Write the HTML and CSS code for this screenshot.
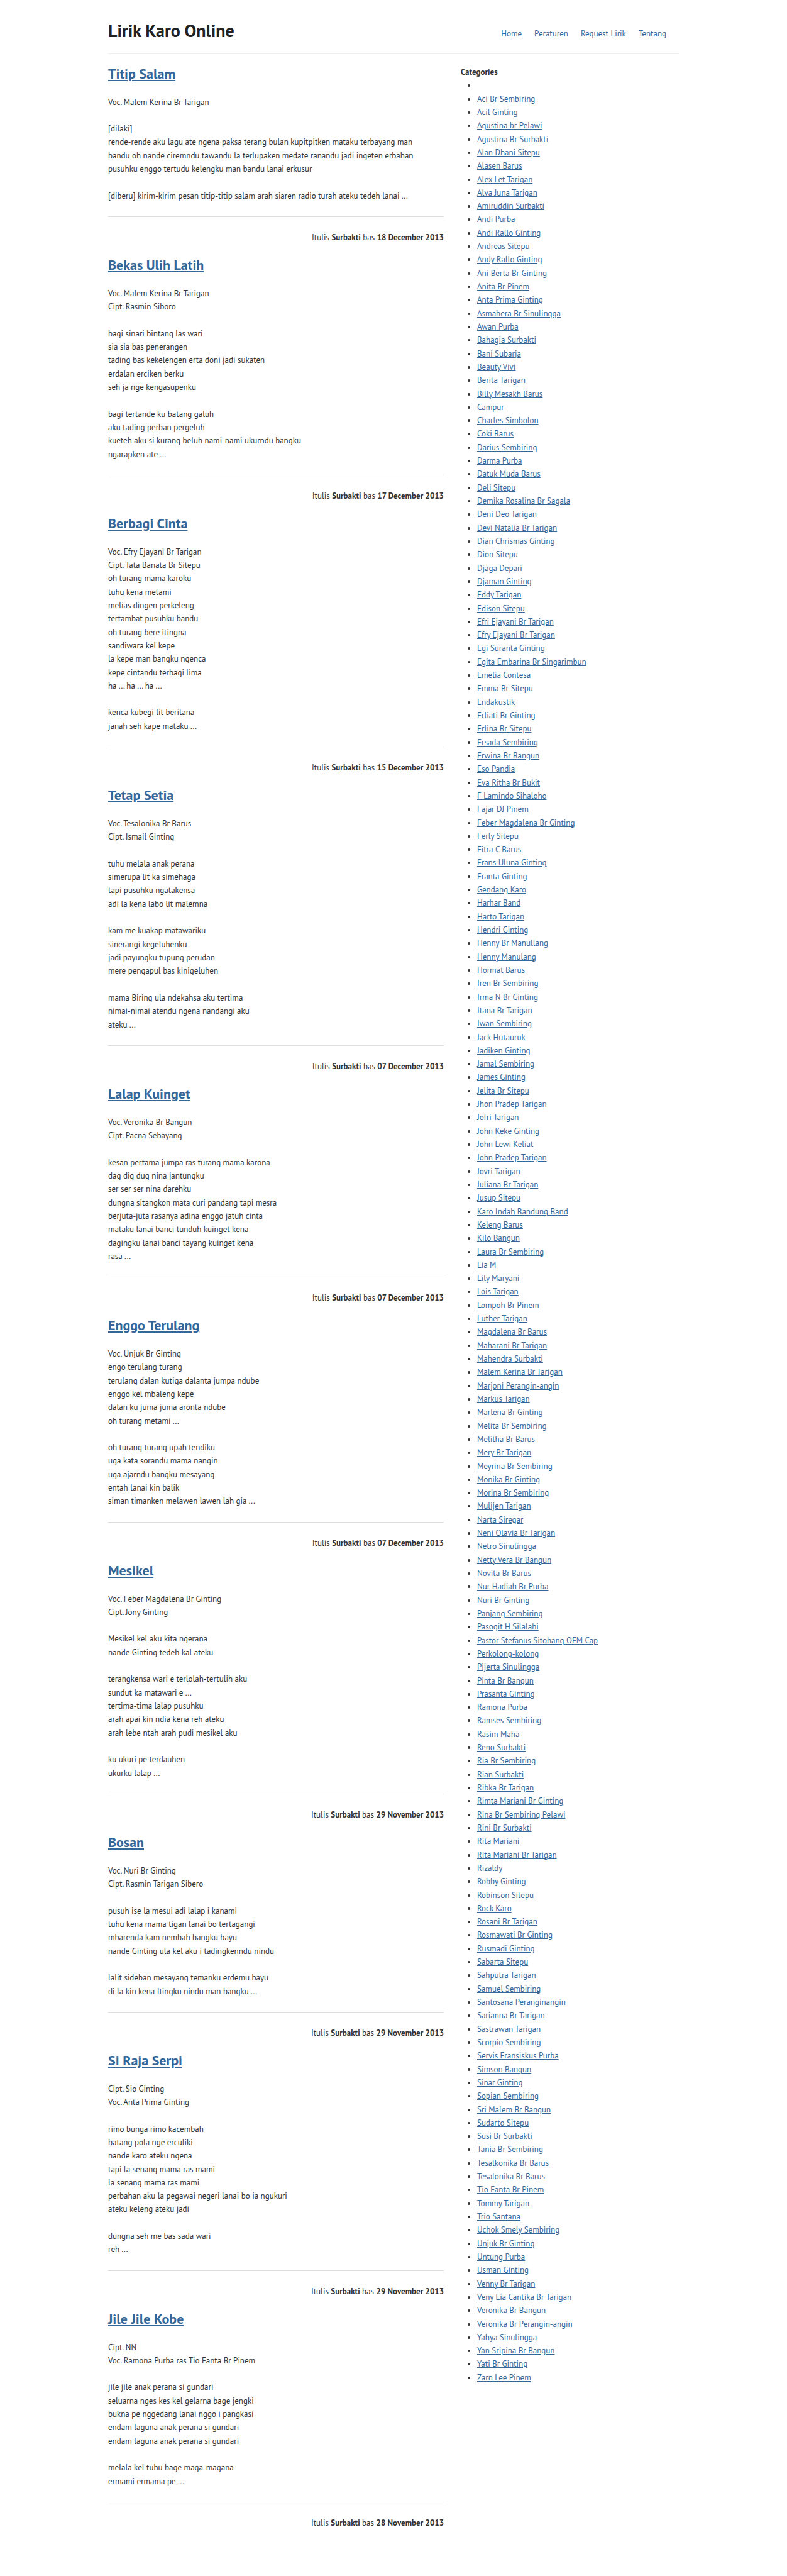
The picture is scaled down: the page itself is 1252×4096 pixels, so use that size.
FILE: index.html
```html
<!DOCTYPE html>
<html lang="id">
<head>
<meta charset="utf-8">
<meta name="viewport" content="width=device-width, initial-scale=1">
<title>Lirik Karo Online</title>
<link rel="stylesheet" href="styles.css">
</head>
<body>
<div class="page">
<header class="site-header">
<h1 class="site-title">Lirik Karo Online</h1>
<nav class="site-nav">
<a href="#">Home</a>
<a href="#">Peraturen</a>
<a href="#">Request Lirik</a>
<a href="#">Tentang</a>
</nav>
</header>
<div class="columns">
<main class="posts">
<article class="post">
<h2 class="post-title"><a href="#">Titip Salam</a></h2>
<p class="lyrics">Voc. Malem Kerina Br Tarigan

[dilaki]
rende-rende aku lagu ate ngena paksa terang bulan kupitpitken mataku terbayang man
bandu oh nande ciremndu tawandu la terlupaken medate ranandu jadi ingeten erbahan
pusuhku enggo tertudu kelengku man bandu lanai erkusur

[diberu] kirim-kirim pesan titip-titip salam arah siaren radio turah ateku tedeh lanai ...</p>
<p class="byline">Itulis <strong>Surbakti</strong> bas <strong>18 December 2013</strong></p>
</article>
<article class="post">
<h2 class="post-title"><a href="#">Bekas Ulih Latih</a></h2>
<p class="lyrics">Voc. Malem Kerina Br Tarigan
Cipt. Rasmin Siboro

bagi sinari bintang las wari
sia sia bas penerangen
tading bas kekelengen erta doni jadi sukaten
erdalan erciken berku
seh ja nge kengasupenku

bagi tertande ku batang galuh
aku tading perban pergeluh
kueteh aku si kurang beluh nami-nami ukurndu bangku
ngarapken ate ...</p>
<p class="byline">Itulis <strong>Surbakti</strong> bas <strong>17 December 2013</strong></p>
</article>
<article class="post">
<h2 class="post-title"><a href="#">Berbagi Cinta</a></h2>
<p class="lyrics">Voc. Efry Ejayani Br Tarigan
Cipt. Tata Banata Br Sitepu
oh turang mama karoku
tuhu kena metami
melias dingen perkeleng
tertambat pusuhku bandu
oh turang bere itingna
sandiwara kel kepe
la kepe man bangku ngenca
kepe cintandu terbagi lima
ha ... ha ... ha ...

kenca kubegi lit beritana
janah seh kape mataku ...</p>
<p class="byline">Itulis <strong>Surbakti</strong> bas <strong>15 December 2013</strong></p>
</article>
<article class="post">
<h2 class="post-title"><a href="#">Tetap Setia</a></h2>
<p class="lyrics">Voc. Tesalonika Br Barus
Cipt. Ismail Ginting

tuhu melala anak perana
simerupa lit ka simehaga
tapi pusuhku ngatakensa
adi la kena labo lit malemna

kam me kuakap matawariku
sinerangi kegeluhenku
jadi payungku tupung perudan
mere pengapul bas kinigeluhen

mama Biring ula ndekahsa aku tertima
nimai-nimai atendu ngena nandangi aku
ateku ...</p>
<p class="byline">Itulis <strong>Surbakti</strong> bas <strong>07 December 2013</strong></p>
</article>
<article class="post">
<h2 class="post-title"><a href="#">Lalap Kuinget</a></h2>
<p class="lyrics">Voc. Veronika Br Bangun
Cipt. Pacna Sebayang

kesan pertama jumpa ras turang mama karona
dag dig dug nina jantungku
ser ser ser nina darehku
dungna sitangkon mata curi pandang tapi mesra
berjuta-juta rasanya adina enggo jatuh cinta
mataku lanai banci tunduh kuinget kena
dagingku lanai banci tayang kuinget kena
rasa ...</p>
<p class="byline">Itulis <strong>Surbakti</strong> bas <strong>07 December 2013</strong></p>
</article>
<article class="post">
<h2 class="post-title"><a href="#">Enggo Terulang</a></h2>
<p class="lyrics">Voc. Unjuk Br Ginting
engo terulang turang
terulang dalan kutiga dalanta jumpa ndube
enggo kel mbaleng kepe
dalan ku juma juma aronta ndube
oh turang metami ...

oh turang turang upah tendiku
uga kata sorandu mama nangin
uga ajarndu bangku mesayang
entah lanai kin balik
siman timanken melawen lawen lah gia ...</p>
<p class="byline">Itulis <strong>Surbakti</strong> bas <strong>07 December 2013</strong></p>
</article>
<article class="post">
<h2 class="post-title"><a href="#">Mesikel</a></h2>
<p class="lyrics">Voc. Feber Magdalena Br Ginting
Cipt. Jony Ginting

Mesikel kel aku kita ngerana
nande Ginting tedeh kal ateku

terangkensa wari e terlolah-tertulih aku
sundut ka matawari e ...
tertima-tima lalap pusuhku
arah apai kin ndia kena reh ateku
arah lebe ntah arah pudi mesikel aku

ku ukuri pe terdauhen
ukurku lalap ...</p>
<p class="byline">Itulis <strong>Surbakti</strong> bas <strong>29 November 2013</strong></p>
</article>
<article class="post">
<h2 class="post-title"><a href="#">Bosan</a></h2>
<p class="lyrics">Voc. Nuri Br Ginting
Cipt. Rasmin Tarigan Sibero

pusuh ise la mesui adi lalap i kanami
tuhu kena mama tigan lanai bo tertagangi
mbarenda kam nembah bangku bayu
nande Ginting ula kel aku i tadingkenndu nindu

lalit sideban mesayang temanku erdemu bayu
di la kin kena Itingku nindu man bangku ...</p>
<p class="byline">Itulis <strong>Surbakti</strong> bas <strong>29 November 2013</strong></p>
</article>
<article class="post">
<h2 class="post-title"><a href="#">Si Raja Serpi</a></h2>
<p class="lyrics">Cipt. Sio Ginting
Voc. Anta Prima Ginting

rimo bunga rimo kacembah
batang pola nge erculiki
nande karo ateku ngena
tapi la senang mama ras mami
la senang mama ras mami
perbahan aku la pegawai negeri lanai bo ia ngukuri
ateku keleng ateku jadi

dungna seh me bas sada wari
reh ...</p>
<p class="byline">Itulis <strong>Surbakti</strong> bas <strong>29 November 2013</strong></p>
</article>
<article class="post">
<h2 class="post-title"><a href="#">Jile Jile Kobe</a></h2>
<p class="lyrics">Cipt. NN
Voc. Ramona Purba ras Tio Fanta Br Pinem

jile jile anak perana si gundari
seluarna nges kes kel gelarna bage jengki
bukna pe nggedang lanai nggo i pangkasi
endam laguna anak perana si gundari
endam laguna anak perana si gundari

melala kel tuhu bage maga-magana
ermami ermama pe ...</p>
<p class="byline">Itulis <strong>Surbakti</strong> bas <strong>28 November 2013</strong></p>
</article>
</main>
<aside class="sidebar">
<h3 class="sidebar-title">Categories</h3>
<ul class="categories">
<li></li>
<li><a href="#">Aci Br Sembiring</a></li>
<li><a href="#">Acil Ginting</a></li>
<li><a href="#">Agustina br Pelawi</a></li>
<li><a href="#">Agustina Br Surbakti</a></li>
<li><a href="#">Alan Dhani Sitepu</a></li>
<li><a href="#">Alasen Barus</a></li>
<li><a href="#">Alex Let Tarigan</a></li>
<li><a href="#">Alva Juna Tarigan</a></li>
<li><a href="#">Amiruddin Surbakti</a></li>
<li><a href="#">Andi Purba</a></li>
<li><a href="#">Andi Rallo Ginting</a></li>
<li><a href="#">Andreas Sitepu</a></li>
<li><a href="#">Andy Rallo Ginting</a></li>
<li><a href="#">Ani Berta Br Ginting</a></li>
<li><a href="#">Anita Br Pinem</a></li>
<li><a href="#">Anta Prima Ginting</a></li>
<li><a href="#">Asmahera Br Sinulingga</a></li>
<li><a href="#">Awan Purba</a></li>
<li><a href="#">Bahagia Surbakti</a></li>
<li><a href="#">Bani Subarja</a></li>
<li><a href="#">Beauty Vivi</a></li>
<li><a href="#">Berita Tarigan</a></li>
<li><a href="#">Billy Mesakh Barus</a></li>
<li><a href="#">Campur</a></li>
<li><a href="#">Charles Simbolon</a></li>
<li><a href="#">Coki Barus</a></li>
<li><a href="#">Darius Sembiring</a></li>
<li><a href="#">Darma Purba</a></li>
<li><a href="#">Datuk Muda Barus</a></li>
<li><a href="#">Deli Sitepu</a></li>
<li><a href="#">Demika Rosalina Br Sagala</a></li>
<li><a href="#">Deni Deo Tarigan</a></li>
<li><a href="#">Devi Natalia Br Tarigan</a></li>
<li><a href="#">Dian Chrismas Ginting</a></li>
<li><a href="#">Dion Sitepu</a></li>
<li><a href="#">Djaga Depari</a></li>
<li><a href="#">Djaman Ginting</a></li>
<li><a href="#">Eddy Tarigan</a></li>
<li><a href="#">Edison Sitepu</a></li>
<li><a href="#">Efri Ejayani Br Tarigan</a></li>
<li><a href="#">Efry Ejayani Br Tarigan</a></li>
<li><a href="#">Egi Suranta Ginting</a></li>
<li><a href="#">Egita Embarina Br Singarimbun</a></li>
<li><a href="#">Emelia Contesa</a></li>
<li><a href="#">Emma Br Sitepu</a></li>
<li><a href="#">Endakustik</a></li>
<li><a href="#">Erliati Br Ginting</a></li>
<li><a href="#">Erlina Br Sitepu</a></li>
<li><a href="#">Ersada Sembiring</a></li>
<li><a href="#">Erwina Br Bangun</a></li>
<li><a href="#">Eso Pandia</a></li>
<li><a href="#">Eva Ritha Br Bukit</a></li>
<li><a href="#">F Lamindo Sihaloho</a></li>
<li><a href="#">Fajar DJ Pinem</a></li>
<li><a href="#">Feber Magdalena Br Ginting</a></li>
<li><a href="#">Ferly Sitepu</a></li>
<li><a href="#">Fitra C Barus</a></li>
<li><a href="#">Frans Uluna Ginting</a></li>
<li><a href="#">Franta Ginting</a></li>
<li><a href="#">Gendang Karo</a></li>
<li><a href="#">Harhar Band</a></li>
<li><a href="#">Harto Tarigan</a></li>
<li><a href="#">Hendri Ginting</a></li>
<li><a href="#">Henny Br Manullang</a></li>
<li><a href="#">Henny Manulang</a></li>
<li><a href="#">Hormat Barus</a></li>
<li><a href="#">Iren Br Sembiring</a></li>
<li><a href="#">Irma N Br Ginting</a></li>
<li><a href="#">Itana Br Tarigan</a></li>
<li><a href="#">Iwan Sembiring</a></li>
<li><a href="#">Jack Hutauruk</a></li>
<li><a href="#">Jadiken Ginting</a></li>
<li><a href="#">Jamal Sembiring</a></li>
<li><a href="#">James Ginting</a></li>
<li><a href="#">Jelita Br Sitepu</a></li>
<li><a href="#">Jhon Pradep Tarigan</a></li>
<li><a href="#">Jofri Tarigan</a></li>
<li><a href="#">John Keke Ginting</a></li>
<li><a href="#">John Lewi Keliat</a></li>
<li><a href="#">John Pradep Tarigan</a></li>
<li><a href="#">Jovri Tarigan</a></li>
<li><a href="#">Juliana Br Tarigan</a></li>
<li><a href="#">Jusup Sitepu</a></li>
<li><a href="#">Karo Indah Bandung Band</a></li>
<li><a href="#">Keleng Barus</a></li>
<li><a href="#">Kilo Bangun</a></li>
<li><a href="#">Laura Br Sembiring</a></li>
<li><a href="#">Lia M</a></li>
<li><a href="#">Lily Maryani</a></li>
<li><a href="#">Lois Tarigan</a></li>
<li><a href="#">Lompoh Br Pinem</a></li>
<li><a href="#">Luther Tarigan</a></li>
<li><a href="#">Magdalena Br Barus</a></li>
<li><a href="#">Maharani Br Tarigan</a></li>
<li><a href="#">Mahendra Surbakti</a></li>
<li><a href="#">Malem Kerina Br Tarigan</a></li>
<li><a href="#">Marjoni Perangin-angin</a></li>
<li><a href="#">Markus Tarigan</a></li>
<li><a href="#">Marlena Br Ginting</a></li>
<li><a href="#">Melita Br Sembiring</a></li>
<li><a href="#">Melitha Br Barus</a></li>
<li><a href="#">Mery Br Tarigan</a></li>
<li><a href="#">Meyrina Br Sembiring</a></li>
<li><a href="#">Monika Br Ginting</a></li>
<li><a href="#">Morina Br Sembiring</a></li>
<li><a href="#">Mulijen Tarigan</a></li>
<li><a href="#">Narta Siregar</a></li>
<li><a href="#">Neni Olavia Br Tarigan</a></li>
<li><a href="#">Netro Sinulingga</a></li>
<li><a href="#">Netty Vera Br Bangun</a></li>
<li><a href="#">Novita Br Barus</a></li>
<li><a href="#">Nur Hadiah Br Purba</a></li>
<li><a href="#">Nuri Br Ginting</a></li>
<li><a href="#">Panjang Sembiring</a></li>
<li><a href="#">Pasogit H Silalahi</a></li>
<li><a href="#">Pastor Stefanus Sitohang OFM Cap</a></li>
<li><a href="#">Perkolong-kolong</a></li>
<li><a href="#">Pijerta Sinulingga</a></li>
<li><a href="#">Pinta Br Bangun</a></li>
<li><a href="#">Prasanta Ginting</a></li>
<li><a href="#">Ramona Purba</a></li>
<li><a href="#">Ramses Sembiring</a></li>
<li><a href="#">Rasim Maha</a></li>
<li><a href="#">Reno Surbakti</a></li>
<li><a href="#">Ria Br Sembiring</a></li>
<li><a href="#">Rian Surbakti</a></li>
<li><a href="#">Ribka Br Tarigan</a></li>
<li><a href="#">Rimta Mariani Br Ginting</a></li>
<li><a href="#">Rina Br Sembiring Pelawi</a></li>
<li><a href="#">Rini Br Surbakti</a></li>
<li><a href="#">Rita Mariani</a></li>
<li><a href="#">Rita Mariani Br Tarigan</a></li>
<li><a href="#">Rizaldy</a></li>
<li><a href="#">Robby Ginting</a></li>
<li><a href="#">Robinson Sitepu</a></li>
<li><a href="#">Rock Karo</a></li>
<li><a href="#">Rosani Br Tarigan</a></li>
<li><a href="#">Rosmawati Br Ginting</a></li>
<li><a href="#">Rusmadi Ginting</a></li>
<li><a href="#">Sabarta Sitepu</a></li>
<li><a href="#">Sahputra Tarigan</a></li>
<li><a href="#">Samuel Sembiring</a></li>
<li><a href="#">Santosana Peranginangin</a></li>
<li><a href="#">Sarianna Br Tarigan</a></li>
<li><a href="#">Sastrawan Tarigan</a></li>
<li><a href="#">Scorpio Sembiring</a></li>
<li><a href="#">Servis Fransiskus Purba</a></li>
<li><a href="#">Simson Bangun</a></li>
<li><a href="#">Sinar Ginting</a></li>
<li><a href="#">Sopian Sembiring</a></li>
<li><a href="#">Sri Malem Br Bangun</a></li>
<li><a href="#">Sudarto Sitepu</a></li>
<li><a href="#">Susi Br Surbakti</a></li>
<li><a href="#">Tania Br Sembiring</a></li>
<li><a href="#">Tesalkonika Br Barus</a></li>
<li><a href="#">Tesalonika Br Barus</a></li>
<li><a href="#">Tio Fanta Br Pinem</a></li>
<li><a href="#">Tommy Tarigan</a></li>
<li><a href="#">Trio Santana</a></li>
<li><a href="#">Uchok Smely Sembiring</a></li>
<li><a href="#">Unjuk Br Ginting</a></li>
<li><a href="#">Untung Purba</a></li>
<li><a href="#">Usman Ginting</a></li>
<li><a href="#">Venny Br Tarigan</a></li>
<li><a href="#">Veny Lia Cantika Br Tarigan</a></li>
<li><a href="#">Veronika Br Bangun</a></li>
<li><a href="#">Veronika Br Perangin-angin</a></li>
<li><a href="#">Yahya Sinulingga</a></li>
<li><a href="#">Yan Sripina Br Bangun</a></li>
<li><a href="#">Yati Br Ginting</a></li>
<li><a href="#">Zarn Lee Pinem</a></li>
</ul>
</aside>
</div>
</div>
</body>
</html>
```

FILE: styles.css
```css
* {
  box-sizing: border-box;
}

body {
  margin: 0;
  background: #fff;
  color: #333;
  font-family: "PT Sans", "Noto Sans", sans-serif;
  font-size: 13px;
  line-height: 1.64;
}

a {
  color: #369;
}

.page {
  max-width: 908px;
  margin: 0 auto;
  padding-bottom: 74px;
}

.site-header {
  display: flex;
  align-items: flex-end;
  justify-content: space-between;
  padding: 28px 20px 15px 0;
  border-bottom: 1px solid #eee;
}

.site-title {
  margin: 0;
  color: #222;
  font-size: 28px;
  line-height: 42px;
}

.site-nav {
  display: flex;
  gap: 20px;
  padding-bottom: 6px;
}

.site-nav a {
  text-decoration: none;
}

.columns {
  display: grid;
  grid-template-columns: minmax(0, 534fr) minmax(0, 347fr);
  column-gap: 27px;
  padding-top: 18px;
}

.post-title {
  margin: 0 0 20px;
  font-size: 22px;
  line-height: 1.25;
}

.lyrics {
  margin: 0;
  padding-bottom: 22px;
  border-bottom: 1px solid #ddd;
  white-space: pre-line;
}

.byline {
  margin: 22px 0 0;
  text-align: right;
}

.post + .post {
  margin-top: 20px;
}

.sidebar-title {
  margin: 0;
  font-size: 13px;
}

.categories {
  margin: 0;
  padding-left: 26px;
}
```
